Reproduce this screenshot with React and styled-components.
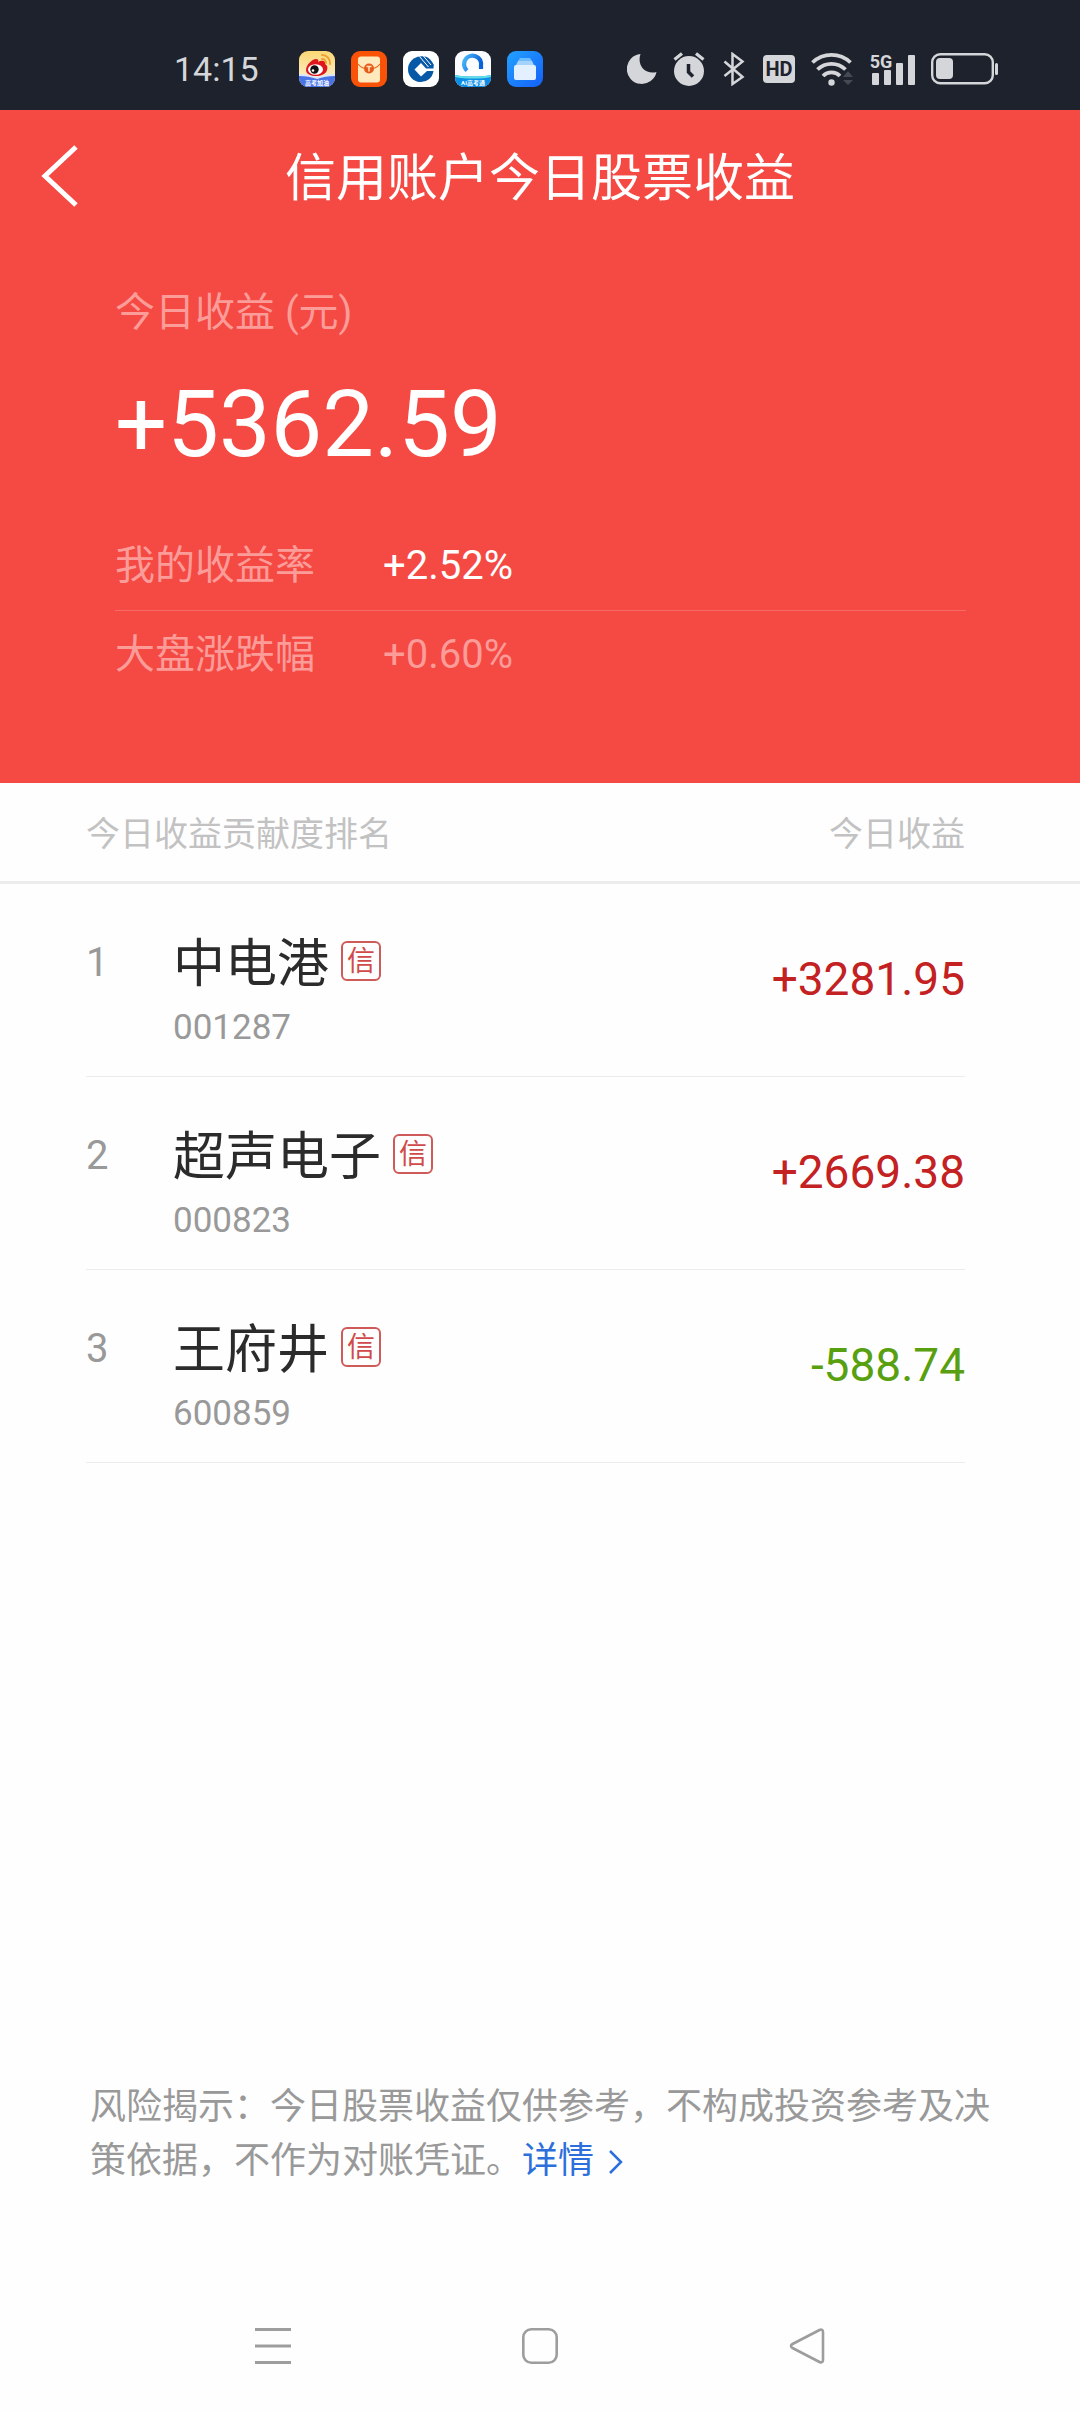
import React from "react";
import styled, { createGlobalStyle } from "styled-components";

const GlobalStyle = createGlobalStyle`
  * {
    box-sizing: border-box;
  }

  body {
    margin: 0;
    background: #fefefe;
    font-family: Roboto, "Noto Sans CJK SC", sans-serif;
    font-weight: 400;
  }

  button {
    padding: 0;
    border: none;
    background: none;
    font: inherit;
    cursor: pointer;
  }

  svg {
    display: block;
  }
`;

const Page = styled.div`
  min-height: 100vh;
  display: flex;
  flex-direction: column;
`;

/* Status bar */

const StatusBar = styled.div`
  height: 110px;
  padding: 28px 81px 0 174px;
  display: flex;
  align-items: flex-start;
  justify-content: space-between;
  background: #1e222c;
  color: #d5d6d9;
`;

const StatusGroup = styled.div`
  height: 82px;
  display: flex;
  align-items: center;
  gap: 16px;
`;

const Clock = styled.time`
  width: 109px;
  font-size: 34px;
  line-height: 40px;
`;

/* Red summary block */

const Hero = styled.header`
  padding-bottom: 84px;
  background: #f54943;
  color: #fff;
`;

const TitleBar = styled.div`
  height: 132px;
  padding: 0 24px;
  display: grid;
  grid-template-columns: 72px 1fr 72px;
  align-items: center;
`;

const BackButton = styled.button`
  height: 72px;
  display: flex;
  align-items: center;
  justify-content: center;
  color: #fff;
`;

const Title = styled.h1`
  margin: 0;
  padding-top: 6px;
  font-size: 51px;
  font-weight: 400;
  line-height: 72px;
  text-align: center;
`;

const Summary = styled.section`
  padding: 43px 114px 0 115px;
`;

const SummaryLabel = styled.p`
  margin: 0;
  font-size: 40px;
  line-height: 56px;
  color: #fb9c99;
`;

const Total = styled.p`
  margin: 30px 0 43px;
  font-size: 92px;
  line-height: 108px;
`;

const Rates = styled.dl`
  margin: 0;
`;

const RateRow = styled.div`
  display: flex;
  font-size: 40px;
  line-height: 88px;
  color: #fb9c99;

  & + & {
    border-top: 1px solid #f76a66;
  }
`;

const RateName = styled.dt`
  width: 268px;
`;

const RateValue = styled.dd`
  margin: 0;
  color: ${props => (props.$strong ? "#fff" : "inherit")};
`;

/* Ranking */

const Ranking = styled.table`
  display: block;
`;

const RankingHead = styled.thead`
  display: block;
  padding: 0 115px 0 86px;
  border-bottom: 3px solid #ececec;
`;

const HeadRow = styled.tr`
  display: flex;
  justify-content: space-between;
`;

const HeadCell = styled.th`
  padding: 4px 0 0;
  font-size: 34px;
  font-weight: 400;
  line-height: 94px;
  color: #c2c2c2;
`;

const RankingBody = styled.tbody`
  display: block;
  padding: 0 115px 0 86px;
`;

const StockRow = styled.tr`
  height: 193px;
  display: flex;
  border-bottom: 1px solid #ececec;
`;

const Rank = styled.td`
  width: 87px;
  padding: 51px 0 0;
  font-size: 40px;
  line-height: 56px;
  color: #999;
`;

const Stock = styled.td`
  flex: 1;
  padding: 53px 0 0;
`;

const StockName = styled.div`
  display: flex;
  align-items: flex-start;
  gap: 12px;
  font-size: 52px;
  line-height: 56px;
  color: #2b2b2b;
`;

const Badge = styled.span`
  width: 40px;
  height: 40px;
  margin-top: 4px;
  border: 2px solid #cf5a5a;
  border-radius: 6px;
  font-size: 28px;
  line-height: 38px;
  text-align: center;
  color: #d04a4a;
`;

const Code = styled.div`
  margin-top: 14px;
  font-size: 35px;
  line-height: 42px;
  color: #999;
`;

const Profit = styled.td`
  padding: 67px 0 0;
  font-size: 46px;
  line-height: 56px;
  color: ${props => (props.$loss ? "#58a010" : "#c32122")};
`;

/* Footer */

const Notice = styled.p`
  margin: auto 90px 0;
  padding-bottom: 92px;
  font-size: 36px;
  line-height: 54px;
  color: #999;
`;

const DetailLink = styled.a`
  color: #2c6fdb;
  text-decoration: none;

  svg {
    display: inline-block;
    margin-left: 14px;
    vertical-align: -1px;
  }
`;

const NavBar = styled.nav`
  height: 132px;
  padding: 0 139px;
  display: grid;
  grid-template-columns: repeat(3, 1fr);
`;

const NavButton = styled.button`
  display: flex;
  align-items: center;
  justify-content: center;
  color: #9d9d9d;
`;

const WeiboIcon = () => (
  <svg width="36" height="36" viewBox="0 0 36 36">
    <defs>
      <linearGradient id="weiboBg" x1="0" y1="0" x2="0" y2="1">
        <stop offset="0" stopColor="#fbd874" />
        <stop offset="0.7" stopColor="#fdecc0" />
      </linearGradient>
      <clipPath id="weiboClip">
        <rect width="36" height="36" rx="9" />
      </clipPath>
    </defs>
    <g clipPath="url(#weiboClip)">
      <rect width="36" height="36" fill="url(#weiboBg)" />
      <path d="M0 24c7 0 12 1 18 3 6-2 11-3 18-3v12H0z" fill="#4a74e6" />
      <path d="M0 23c7 0 12 1 18 3 6-2 11-3 18-3v2c-7 0-12 1-18 3-6-2-11-3-18-3z" fill="#d9e6fb" />
      <path d="M7 19c0-5 6-11 10-11 2 0 3 1 2 3 3-2 8-2 7 2 2 1 3 3 2 6-1 4-6 6-11 6S7 23 7 19z" fill="#e0161d" />
      <ellipse cx="16.500" cy="18.500" rx="7.500" ry="5.200" fill="#fff" />
      <circle cx="15.500" cy="18.500" r="4.200" fill="#111" />
      <circle cx="14" cy="19.500" r="1.300" fill="#fff" />
      <path d="M23 4a8 8 0 0 1 8 9M23 8a4 4 0 0 1 4 4" fill="none" stroke="#f0a030" strokeWidth="2" strokeLinecap="round" />
      <text x="18" y="34" fontSize="6" fontWeight="700" textAnchor="middle" fill="#fff">高考加油</text>
    </g>
  </svg>
);

const EnvelopeIcon = () => (
  <svg width="36" height="36" viewBox="0 0 36 36">
    <rect width="36" height="36" rx="9" fill="#fa5307" />
    <rect x="7" y="5.500" width="22" height="26" rx="3" fill="#ffe9bd" />
    <path d="M7 13c3 4 6 5 11 5s8-1 11-5" fill="none" stroke="#e9691f" strokeWidth="1.200" />
    <circle cx="18" cy="17.500" r="5" fill="#e8591a" />
    <path d="M15.500 15.500h5M18 15.500v5" stroke="#ffe9bd" strokeWidth="1.500" />
  </svg>
);

const BankIcon = () => (
  <svg width="36" height="36" viewBox="0 0 36 36">
    <rect width="36" height="36" rx="9" fill="#fff" />
    <path
      d="M17 5.500A12.800 12.800 0 1 0 30.500 20h-6.500l-6 5.500-6.500-7 6.500-6.500 5 5.500h7.500v-4z"
      fill="#0858a8"
    />
    <path d="M17 5.500c6-1.500 11 2 13.500 8v2h-4z" fill="#0858a8" />
    <path d="M16.500 5.500l9 10.500M20 4.500l8 9.500" stroke="#fff" strokeWidth="1" />
  </svg>
);

const BrowserIcon = () => (
  <svg width="36" height="36" viewBox="0 0 36 36">
    <defs>
      <linearGradient id="ringFill" x1="0" y1="0" x2="1" y2="0.4">
        <stop offset="0" stopColor="#48b8fa" />
        <stop offset="1" stopColor="#0a62d8" />
      </linearGradient>
      <clipPath id="browserClip">
        <rect width="36" height="36" rx="9" />
      </clipPath>
    </defs>
    <g clipPath="url(#browserClip)">
      <rect width="36" height="36" fill="#fafcff" />
      <path d="M12 19.500A8.500 8.500 0 1 1 26 14.500V18" fill="none" stroke="url(#ringFill)" strokeWidth="4.200" />
      <path d="M13 23a4 4 0 0 1 3-4 5 5 0 0 1 9 0 3 3 0 0 1 3 4z" fill="#fff" />
      <path d="M0 24c10 2 26 2 36 0v12H0z" fill="#0d8ee6" />
      <path d="M0 24c10 2 26 2 36 0v2c-10 2-26 2-36 0z" fill="#5fe0e6" />
      <text x="18" y="33.500" fontSize="6" fontWeight="700" textAnchor="middle" fill="#fff">AI高考通</text>
    </g>
  </svg>
);

const WalletIcon = () => (
  <svg width="36" height="36" viewBox="0 0 36 36">
    <defs>
      <linearGradient id="walletBg" x1="0" y1="0" x2="1" y2="1">
        <stop offset="0" stopColor="#22a2ff" />
        <stop offset="1" stopColor="#1460fa" />
      </linearGradient>
    </defs>
    <rect width="36" height="36" rx="9" fill="url(#walletBg)" />
    <path d="M13 7h10l2 3H11z" fill="#6fbcff" />
    <path d="M11 10h14l2 4H9z" fill="#a5d3ff" />
    <rect x="7" y="14" width="22" height="15" rx="2" fill="#e3f0ff" />
  </svg>
);

const MoonIcon = () => (
  <svg width="30" height="30" viewBox="0 0 30 30" fill="currentColor">
    <path d="M13.500 0A15 15 0 1 0 29.500 18 C19 21 9.500 12 13.500 0z" />
  </svg>
);

const AlarmIcon = () => (
  <svg width="34" height="34" viewBox="0 0 34 34">
    <circle cx="16" cy="19" r="15" fill="currentColor" />
    <path d="M1.500 7.500l7.500-6M30.500 7.500l-7.500-6" stroke="currentColor" strokeWidth="3.200" />
    <path d="M15.500 12v8l4.500 4.500" fill="none" stroke="#1e222c" strokeWidth="3.500" />
  </svg>
);

const BluetoothIcon = () => (
  <svg width="24" height="34" viewBox="0 0 24 34" fill="none" stroke="currentColor" strokeWidth="2.500">
    <path d="M1.500 9.500L19.500 25 9.500 32V2l10 7.500L1.500 24" />
  </svg>
);

const HdIcon = () => (
  <svg width="32" height="28" viewBox="0 0 32 28">
    <rect width="32" height="28" rx="4" fill="currentColor" />
    <text x="16" y="21" fontSize="20" fontWeight="700" textAnchor="middle" fill="#1e222c">
      HD
    </text>
  </svg>
);

const WifiIcon = () => (
  <svg width="42" height="34" viewBox="0 0 42 34" fill="none" stroke="currentColor" strokeWidth="3.800">
    <path d="M1.500 10.500a27.500 27.500 0 0 1 38 0" />
    <path d="M6.500 17.500a20 20 0 0 1 28 0" />
    <path d="M12 24a12 12 0 0 1 17 0" />
    <circle cx="20.500" cy="30.500" r="3.200" fill="currentColor" stroke="none" />
    <path d="M32 25l5-6 5 6zM32 28h10l-5 5z" fill="#454953" stroke="none" />
  </svg>
);

const SignalIcon = () => (
  <svg width="46" height="34" viewBox="0 0 46 34" fill="currentColor">
    <rect x="3" y="21" width="7" height="12" rx="1" />
    <rect x="15" y="18" width="7" height="15" rx="1" />
    <rect x="27" y="11" width="7" height="22" rx="1" />
    <rect x="39" y="3" width="7" height="30" rx="1" />
    <text x="12" y="16" fontSize="18" fontWeight="700" textAnchor="middle">
      5G
    </text>
  </svg>
);

const BatteryIcon = () => (
  <svg width="68" height="32" viewBox="0 0 68 32">
    <rect x="1.200" y="1.200" width="60.600" height="29" rx="8" fill="none" stroke="currentColor" strokeWidth="2.400" />
    <rect x="5" y="5" width="17" height="21" rx="4" fill="currentColor" />
    <rect x="64" y="10" width="3" height="12" rx="1.500" fill="currentColor" />
  </svg>
);

const stocks = [
  { name: "中电港", code: "001287", profit: "+3281.95" },
  { name: "超声电子", code: "000823", profit: "+2669.38" },
  { name: "王府井", code: "600859", profit: "-588.74" }
];

const App = () => {
  return (
    <Page lang="zh-CN">
      <GlobalStyle />
      <StatusBar>
        <StatusGroup>
          <Clock>14:15</Clock>
          <WeiboIcon />
          <EnvelopeIcon />
          <BankIcon />
          <BrowserIcon />
          <WalletIcon />
        </StatusGroup>
        <StatusGroup>
          <MoonIcon />
          <AlarmIcon />
          <BluetoothIcon />
          <HdIcon />
          <WifiIcon />
          <SignalIcon />
          <BatteryIcon />
        </StatusGroup>
      </StatusBar>

      <Hero>
        <TitleBar>
          <BackButton aria-label="返回">
            <svg width="38" height="62" viewBox="0 0 38 62" fill="none" stroke="currentColor" strokeWidth="5">
              <path d="M35 2L4 31l31 29" />
            </svg>
          </BackButton>
          <Title>信用账户今日股票收益</Title>
        </TitleBar>
        <Summary>
          <SummaryLabel>今日收益 (元)</SummaryLabel>
          <Total>+5362.59</Total>
          <Rates>
            <RateRow>
              <RateName>我的收益率</RateName>
              <RateValue $strong>+2.52%</RateValue>
            </RateRow>
            <RateRow>
              <RateName>大盘涨跌幅</RateName>
              <RateValue>+0.60%</RateValue>
            </RateRow>
          </Rates>
        </Summary>
      </Hero>

      <Ranking>
        <RankingHead>
          <HeadRow>
            <HeadCell colSpan={2}>今日收益贡献度排名</HeadCell>
            <HeadCell>今日收益</HeadCell>
          </HeadRow>
        </RankingHead>
        <RankingBody>
          {stocks.map((stock, index) => (
            <StockRow key={stock.code}>
              <Rank>{index + 1}</Rank>
              <Stock>
                <StockName>
                  {stock.name}
                  <Badge>信</Badge>
                </StockName>
                <Code>{stock.code}</Code>
              </Stock>
              <Profit $loss={stock.profit.startsWith("-")}>{stock.profit}</Profit>
            </StockRow>
          ))}
        </RankingBody>
      </Ranking>

      <Notice>
        风险揭示：今日股票收益仅供参考，不构成投资参考及决策依据，不作为对账凭证。
        <DetailLink href="#detail">
          详情
          <svg width="15" height="24" viewBox="0 0 15 24" fill="none" stroke="currentColor" strokeWidth="2.500">
            <path d="M2 1l11 11L2 23" />
          </svg>
        </DetailLink>
      </Notice>

      <NavBar>
        <NavButton aria-label="菜单">
          <svg width="36" height="38" viewBox="0 0 36 38" fill="none" stroke="currentColor" strokeWidth="3">
            <path d="M0 2.500h36M0 19h36M0 35.500h36" />
          </svg>
        </NavButton>
        <NavButton aria-label="主页">
          <svg width="36" height="36" viewBox="0 0 36 36" fill="none" stroke="currentColor" strokeWidth="2.600">
            <rect x="1.300" y="1.300" width="33.400" height="33.400" rx="8" />
          </svg>
        </NavButton>
        <NavButton aria-label="后退">
          <svg width="36" height="36" viewBox="0 0 36 36" fill="none" stroke="currentColor" strokeWidth="2.600">
            <path d="M30.500 2L3.500 16c-2 1-2 3 0 4l27 14c2 1 3.500 0 3.500-2V4c0-2-1.500-3-3.500-2z" />
          </svg>
        </NavButton>
      </NavBar>
    </Page>
  );
};

export default App;
